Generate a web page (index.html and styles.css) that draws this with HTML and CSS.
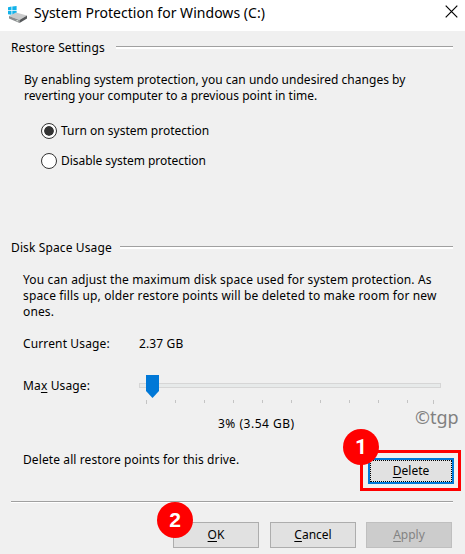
FILE: index.html
```html
<!DOCTYPE html>
<html lang="en">
<head>
    <meta charset="UTF-8">
    <meta name="viewport" content="width=device-width, initial-scale=1.0">
    <title>System Protection for Windows (C:)</title>
    <link rel="stylesheet" href="styles.css">
</head>
<body>

    <div class="title-bar">
        <svg class="drive-icon" width="20" height="18" viewBox="0 0 20 18">
            <path d="M0 1.2L3.5.6V4.3H0zM4.3.5L8.6 0V4.3H4.3zM0 5.1H3.5V8.8L0 8.2zM4.3 5.1H8.6V9.4L4.3 8.9z" fill="#12b2ea"/>
            <path d="M1 10L8 6.5L19 9.5L11.500 14z" fill="#c9cacb"/>
            <path d="M1 10L11.500 14V17L1 12.500z" fill="#8c8e90"/>
            <path d="M11.500 14L19 9.500V12.500L11.500 17z" fill="#55585a"/>
            <path d="M8.500 13.900L10.300 14.600V15.600L8.500 14.900z" fill="#e8f4e8"/>
        </svg>
        <h1 class="title">System Protection for Windows (C:)</h1>
        <svg class="close-icon" width="13" height="13" viewBox="0 0 13 13">
            <path d="M.7.7L12.300 12.300M12.300.7L.7 12.300" stroke="#000" stroke-width="1.200"/>
        </svg>
    </div>

    <div class="dialog">
        <div class="section-header"><h2 class="restore-title">Restore Settings</h2></div>
        <p class="restore-text">By enabling system protection, you can undo undesired changes by<br>reverting your computer to a previous point in time.</p>

        <div class="options">
            <label class="option"><span class="radio checked"></span>Turn on system protection</label>
            <label class="option option-off"><span class="radio"></span>Disable system protection</label>
        </div>

        <div class="section-header"><h2 class="disk-title">Disk Space Usage</h2></div>
        <p class="disk-text">You can adjust the maximum disk space used for system protection. As<br>space fills up, older restore points will be deleted to make room for new<br>ones.</p>

        <div class="usage-row">
            <span class="usage-label">Current Usage:</span>
            <span class="usage-value">2.37 GB</span>
        </div>

        <div class="slider-row">
            <span class="usage-label">Ma<u>x</u> Usage:</span>
            <div class="slider">
                <div class="track"><div class="thumb"></div></div>
                <div class="ticks">
                    <i></i><i></i><i></i><i></i><i></i><i></i><i></i><i></i><i></i><i></i><i></i>
                </div>
            </div>
        </div>

        <div class="percent-row">
            <span class="percent">3% (3.54 GB)</span>
            <span class="watermark">©tgp</span>
        </div>

        <div class="delete-row">
            <span class="delete-text">Delete all restore points for this drive.</span>
            <div class="highlight">
                <button class="button delete-button"><span><u>D</u>elete</span></button>
                <span class="badge badge-one">1</span>
            </div>
        </div>

        <div class="footer">
            <div class="button-wrap">
                <button class="button"><u>O</u>K</button>
                <span class="badge badge-two">2</span>
            </div>
            <button class="button"><u>C</u>ancel</button>
            <button class="button apply-button" disabled><u>A</u>pply</button>
        </div>
    </div>

</body>
</html>
```
FILE: styles.css
```css
* {
    box-sizing: border-box;
}

body {
    margin: 0;
    height: 554px;
    overflow: hidden;
    background-color: #f0f0f0;
    color: #000;
    font-family: "Noto Sans", "Open Sans", sans-serif;
    font-size: 12px;
    line-height: 16px;
    white-space: nowrap;
}

h1,
h2,
p {
    margin: 0;
    font-size: inherit;
    font-weight: normal;
}

u {
    text-underline-offset: 2px;
    text-decoration-skip-ink: none;
}

/* Title bar */
.title-bar {
    display: flex;
    align-items: center;
    height: 31px;
    padding: 0 7px 5px 8px;
    background-color: #fff;
}

.drive-icon {
    margin-top: 3px;
}

.title {
    margin-left: 6px;
    font-size: 14px;
    line-height: 20px;
    letter-spacing: 0.03px;
}

.close-icon {
    margin-left: auto;
    margin-top: -3px;
}

.dialog {
    padding: 8px 12px 0 11px;
}

/* Group titles with an etched line */
.section-header {
    display: flex;
    align-items: center;
    height: 17px;
    letter-spacing: 0.12px;
}

.section-header::after {
    content: "";
    flex: 1;
    height: 2px;
    margin-left: 8px;
    border-top: 1px solid #a0a0a0;
    background-color: #fff;
}

.restore-title {
    width: 97px;
}

.disk-title {
    width: 101px;
}

.restore-text {
    margin: 16px 0 0 13px;
    letter-spacing: 0.02px;
}

.disk-text {
    margin: 16px 0 0 12px;
    letter-spacing: 0.14px;
}

/* Radio buttons */
.options {
    margin: 12px 0 0 30px;
    height: 123px;
}

.option {
    display: flex;
    align-items: center;
    height: 30px;
}

.option-off {
    letter-spacing: -0.05px;
}

.radio {
    width: 16px;
    height: 16px;
    margin-right: 4px;
    border: 1px solid #333;
    border-radius: 50%;
    background-color: #fff;
}

.radio.checked {
    padding: 2px;
    background-color: #333;
    background-clip: content-box;
    box-shadow: inset 0 0 0 2px #fff;
}

/* Disk usage */
.usage-row {
    display: flex;
    margin: 16px 0 0 12px;
    letter-spacing: 0.13px;
}

.usage-label {
    width: 116px;
}

.slider-row {
    display: flex;
    height: 32px;
    margin: 23px 0 0 12px;
    letter-spacing: 0.13px;
}

.slider-row .usage-label {
    margin-top: 3px;
}

.slider {
    width: 302px;
    padding-top: 8px;
}

.track {
    position: relative;
    height: 5px;
    border: 1px solid #d6d6d6;
    background-color: #e7eaea;
}

.thumb {
    position: absolute;
    left: 6px;
    top: -9px;
    width: 13px;
    height: 23px;
    background-color: #0078d7;
    clip-path: polygon(0 0, 100% 0, 100% 70%, 50% 100%, 0 70%);
}

.ticks {
    display: flex;
    margin: 12px 0 0 7px;
}

.ticks i {
    width: 1px;
    height: 3px;
    margin-right: 28px;
    background-color: #c4c4c4;
}

.ticks i:first-child,
.ticks i:last-child {
    height: 4px;
}

.ticks i:nth-child(10) {
    margin-right: 25px;
}

.ticks i:last-child {
    margin-right: 0;
}

.percent-row {
    display: flex;
    height: 43px;
    margin-right: -8px;
    padding-left: 207px;
}

.percent {
    flex: none;
    width: 197px;
    padding-top: 9px;
    letter-spacing: 0.5px;
}

.watermark {
    color: #808080;
    font-size: 18px;
    line-height: 20px;
}

/* Delete row */
.delete-row {
    display: flex;
    height: 41px;
    margin: 0 -8px 0 12px;
}

.delete-text {
    padding-top: 2px;
    letter-spacing: 0.1px;
}

.highlight {
    position: relative;
    width: 101px;
    height: 41px;
    margin-left: auto;
    padding: 5px;
    border: 3px solid #f00;
}

.button {
    display: block;
    width: 86px;
    height: 26px;
    padding: 0;
    border: 1px solid #adadad;
    background-color: #e1e1e1;
    color: #000;
    font: inherit;
}

.delete-button {
    border: 2px solid #0078d7;
}

.delete-button span {
    display: block;
    height: 22px;
    border: 1px dotted #000;
    line-height: 20px;
}

.apply-button {
    border-color: #bfbfbf;
    background-color: #ccc;
    color: #838383;
}

/* Numbered step markers */
.badge {
    position: absolute;
    width: 36px;
    height: 36px;
    border-radius: 50%;
    background-color: #f00;
    color: #fff;
    font: bold 21px/36px "Liberation Sans", sans-serif;
    text-align: center;
}

.badge-one {
    left: -20px;
    top: -24px;
    font-family: Roboto, sans-serif;
}

.badge-two {
    left: -16px;
    top: -20px;
}

/* Bottom buttons */
.footer {
    display: flex;
    justify-content: flex-end;
    gap: 10px;
    margin-top: 10px;
    padding: 20px 1px 0 0;
    border-top: 1px solid #a0a0a0;
    box-shadow: inset 0 1px #fff;
}

.button-wrap {
    position: relative;
    margin-right: 1px;
}
```
